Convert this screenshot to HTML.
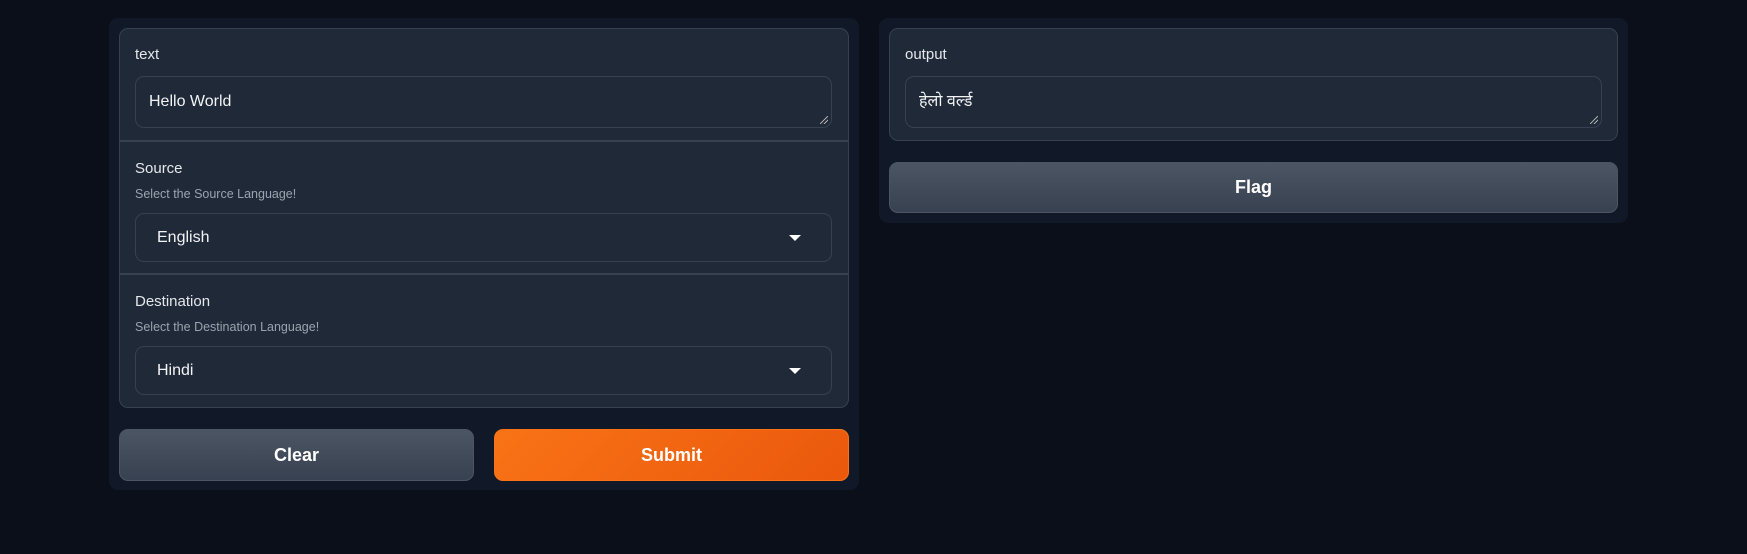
<!DOCTYPE html>
<html><head><meta charset="utf-8"><style>
*{box-sizing:border-box;margin:0;padding:0}
body{width:1747px;height:554px;background:#0b0f19;font-family:"Liberation Sans","Noto Sans CJK SC",sans-serif;color:#e5e7eb;position:relative;overflow:hidden}
.abs{position:absolute}
.panel{background:#111827;border-radius:9px}
.block{background:#1f2937;border:1px solid #374151;border-radius:9px}
.lbl{font-size:15px;color:#e5e7eb}
.desc{font-size:12.5px;color:#9ca3af}
.ta{background:#1f2937;border:1px solid #374151;border-radius:9px;font-size:16px;color:#f3f4f6;padding:0 13px;display:flex;align-items:center}
.div{height:2px;background:#374151}
.btn{border-radius:9px;font-weight:bold;font-size:18px;color:#fff;display:flex;align-items:center;justify-content:center;border:1px solid #4b5563}
.gray{background:linear-gradient(180deg,#4b5563,#374151)}
.org{background:linear-gradient(135deg,#f97316,#ea580c);border-color:#f97316}
.arrow{position:absolute;right:30px;top:50%;margin-top:-3px;width:0;height:0;border-left:6px solid transparent;border-right:6px solid transparent;border-top:6px solid #fff}
.grip{position:absolute;right:3px;bottom:3px;width:8px;height:8px;background:linear-gradient(135deg,transparent 45%,#aaa 45%,#aaa 55%,transparent 55%,transparent 70%,#aaa 70%,#aaa 80%,transparent 80%)}
</style></head><body>
<div class="abs panel" style="left:109px;top:18px;width:750px;height:472px"></div>
<div class="abs block" style="left:119px;top:28px;width:730px;height:380px"></div>
<div class="abs lbl" style="left:135px;top:46px">text</div>
<div class="abs ta" style="left:135px;top:76px;width:697px;height:52px">Hello World<div class="grip"></div></div>
<div class="abs div" style="left:120px;top:140px;width:728px"></div>
<div class="abs lbl" style="left:135px;top:160px">Source</div>
<div class="abs desc" style="left:135px;top:187px">Select the Source Language!</div>
<div class="abs ta" style="left:135px;top:213px;width:697px;height:49px;padding-left:21px">English<div class="arrow"></div></div>
<div class="abs div" style="left:120px;top:273px;width:728px"></div>
<div class="abs lbl" style="left:135px;top:293px">Destination</div>
<div class="abs desc" style="left:135px;top:320px">Select the Destination Language!</div>
<div class="abs ta" style="left:135px;top:346px;width:697px;height:49px;padding-left:21px">Hindi<div class="arrow"></div></div>
<div class="abs btn gray" style="left:119px;top:429px;width:355px;height:52px">Clear</div>
<div class="abs btn org" style="left:494px;top:429px;width:355px;height:52px">Submit</div>

<div class="abs panel" style="left:879px;top:18px;width:749px;height:205px"></div>
<div class="abs block" style="left:889px;top:28px;width:729px;height:113px"></div>
<div class="abs lbl" style="left:905px;top:46px">output</div>
<div class="abs ta" style="left:905px;top:76px;width:697px;height:52px;font-family:'Liberation Sans','Noto Sans CJK SC','DejaVu Sans',sans-serif;align-items:flex-start;padding-top:12px">हेलो वर्ल्ड<div class="grip"></div></div>
<div class="abs btn gray" style="left:889px;top:162px;width:729px;height:51px">Flag</div>
</body></html>
